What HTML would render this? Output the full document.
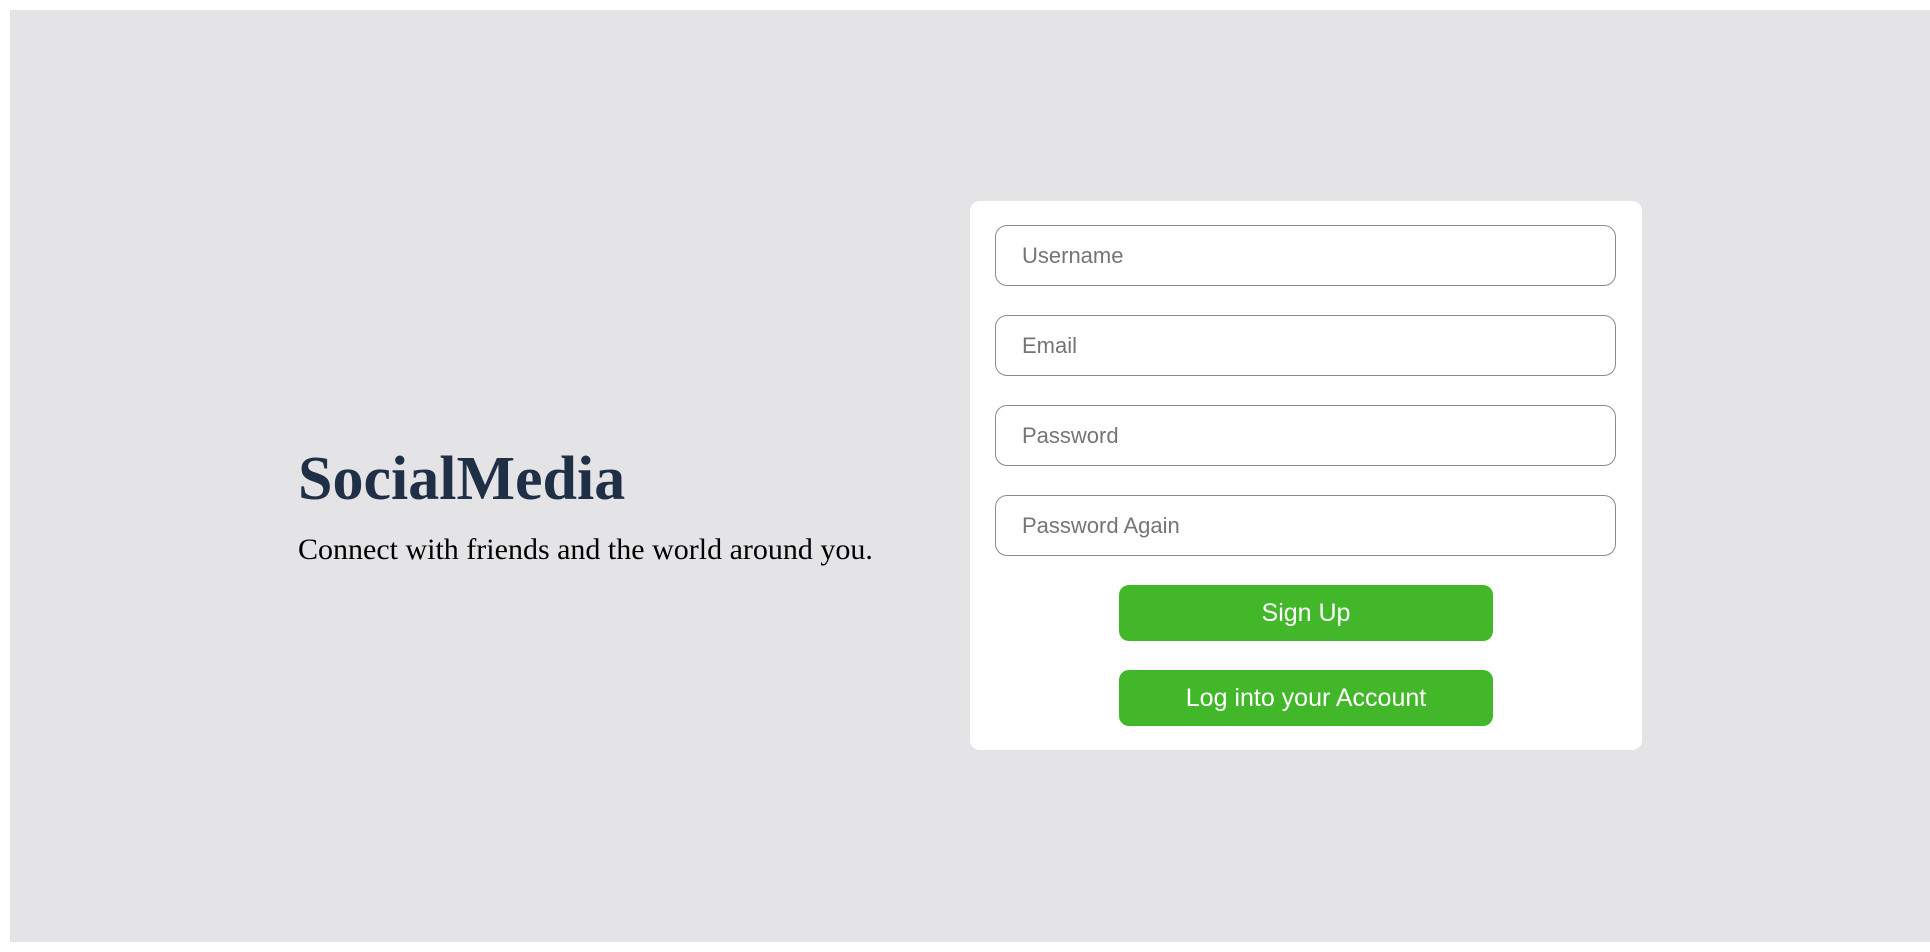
<!DOCTYPE html>
<html><head><meta charset="utf-8"><style>
html,body{margin:0;padding:0;width:1930px;height:952px;background:#fff;overflow:hidden}
.bg{position:absolute;left:10px;top:10px;width:1920px;height:932px;background:#e4e4e6}
.title{position:absolute;left:298px;top:448px;font:bold 62px/1 "Liberation Serif",serif;color:#1f2f46;margin:0}
.sub{position:absolute;left:298px;top:535px;font:30px/1 "Liberation Serif",serif;color:#000}
.card{position:absolute;left:970px;top:201px;width:672px;height:549px;background:#fff;border-radius:10px}
.in{position:absolute;left:25px;height:59px;border:1px solid #8a8a8a;border-radius:12px;box-sizing:content-box;font:22px/59px "Liberation Sans",sans-serif;color:#757575;padding-left:26px;width:593px}
.btn{position:absolute;left:149px;width:374px;height:56px;background:#42b72a;border-radius:10px;color:#fff;font:25px/56px "Liberation Sans",sans-serif;text-align:center}
</style></head><body>
<div class="bg"></div>
<h1 class="title">SocialMedia</h1>
<div class="sub">Connect with friends and the world around you.</div>
<div class="card">
<div class="in" style="top:24px">Username</div>
<div class="in" style="top:114px">Email</div>
<div class="in" style="top:204px">Password</div>
<div class="in" style="top:294px">Password Again</div>
<div class="btn" style="top:384px">Sign Up</div>
<div class="btn" style="top:469px">Log into your Account</div>
</div>
</body></html>
